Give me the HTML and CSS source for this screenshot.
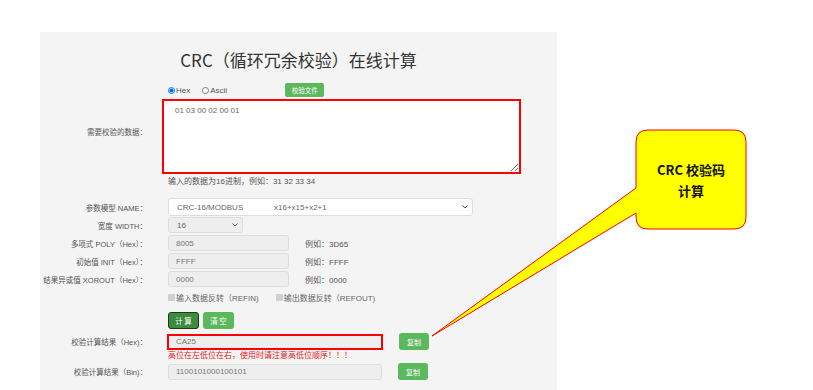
FILE: index.html
```html
<!DOCTYPE html>
<html lang="zh-CN">
<head>
    <meta charset="UTF-8">
    <meta name="viewport" content="width=device-width, initial-scale=1.0">
    <title>CRC（循环冗余校验）在线计算</title>
    <link rel="stylesheet" href="styles.css">
</head>
<body>

    <div class="panel">
        <h1>CRC（循环冗余校验）在线计算</h1>

        <div class="row row-mode">
            <div class="label"></div>
            <div class="field">
                <label class="radio"><input type="radio" name="mode" checked>Hex</label>
                <label class="radio"><input type="radio" name="mode">Ascii</label>
                <button class="btn btn-file">校验文件</button>
            </div>
        </div>

        <div class="row row-data">
            <div class="label label-top">需要校验的数据：</div>
            <div class="field field-col">
                <textarea class="data">01 03 00 02 00 01</textarea>
                <div class="hint">输入的数据为16进制，例如：31 32 33 34</div>
            </div>
        </div>

        <div class="row row-name">
            <div class="label">参数模型 NAME：</div>
            <div class="field">
                <div class="select select-name">
                    <span class="model">CRC-16/MODBUS</span>
                    <span>x16+x15+x2+1</span>
                    <svg class="chev" width="6" height="4" viewBox="0 0 6 4"><path d="M0.5 0.5 L3 3 L5.5 0.5" fill="none" stroke="#555" stroke-width="1"/></svg>
                </div>
            </div>
        </div>

        <div class="row row-width">
            <div class="label">宽度 WIDTH：</div>
            <div class="field">
                <div class="select select-width">
                    <span>16</span>
                    <svg class="chev" width="6" height="4" viewBox="0 0 6 4"><path d="M0.5 0.5 L3 3 L5.5 0.5" fill="none" stroke="#555" stroke-width="1"/></svg>
                </div>
            </div>
        </div>

        <div class="row row-param">
            <div class="label">多项式 POLY（Hex）：</div>
            <div class="field">
                <input class="input input-short" value="8005" disabled>
                <span class="example">例如：3D65</span>
            </div>
        </div>

        <div class="row row-param">
            <div class="label">初始值 INIT（Hex）：</div>
            <div class="field">
                <input class="input input-short" value="FFFF" disabled>
                <span class="example">例如：FFFF</span>
            </div>
        </div>

        <div class="row row-param">
            <div class="label">结果异或值 XOROUT（Hex）：</div>
            <div class="field">
                <input class="input input-short" value="0000" disabled>
                <span class="example">例如：0000</span>
            </div>
        </div>

        <div class="row row-check">
            <div class="label"></div>
            <div class="field">
                <label class="check check-in"><input type="checkbox" disabled>输入数据反转（REFIN)</label>
                <label class="check"><input type="checkbox" disabled>输出数据反转（REFOUT)</label>
            </div>
        </div>

        <div class="row row-btns">
            <div class="label"></div>
            <div class="field">
                <button class="btn btn-calc active">计 算</button>
                <button class="btn btn-calc">清 空</button>
            </div>
        </div>

        <div class="row row-hex">
            <div class="label">校验计算结果（Hex)：</div>
            <div class="field">
                <input class="input input-result marked" value="CA25" readonly>
                <button class="btn btn-copy">复制</button>
            </div>
        </div>

        <div class="row row-warn">
            <div class="label"></div>
            <div class="field warn">高位在左低位在右，使用时请注意高低位顺序！！！</div>
        </div>

        <div class="row row-bin">
            <div class="label">校验计算结果（Bin)：</div>
            <div class="field">
                <input class="input input-result" value="1100101000100101" readonly>
                <button class="btn btn-copy">复制</button>
            </div>
        </div>
    </div>

    <!-- выноска поверх страницы -->
    <svg class="callout-shape" width="813" height="390" viewBox="0 0 813 390">
        <path d="M432 336 L636 213 L636 217 Q636 229 648 229 L734 229 Q746 229 746 217 L746 142 Q746 130 734 130 L648 130 Q636 130 636 142 L636 188 Z"
              fill="#ffff00" stroke="#ff0000" stroke-width="1"/>
    </svg>
    <div class="callout-text">CRC 校验码<br>计算</div>

</body>
</html>
```

FILE: styles.css
```css
:root {
    --panel: #f4f4f4;
    --label: #555;
    --value: #777;
    --border: #ddd;
    --green: #5cb85c;
    --red: #ff0000;
}

body {
    font-family: 'Liberation Sans', 'Noto Sans CJK SC', sans-serif;
    background: #fff;
    margin: 0;
    width: 813px;
    height: 390px;
    position: relative;
    overflow: hidden;
}

.panel {
    margin: 32px 0 0 40px;
    width: 517px;
    height: 358px;
    background: var(--panel);
}

h1 {
    font-family: 'Noto Sans CJK SC', sans-serif;
    font-size: 17px;
    font-weight: 400;
    line-height: 22px;
    color: #333;
    text-align: center;
    margin: 0;
    padding-top: 17px;
}

.row {
    display: grid;
    grid-template-columns: 107px 1fr;
    column-gap: 21px;
    margin-top: 2px;
}

.label {
    display: flex;
    justify-content: flex-end;
    align-items: center;
    white-space: nowrap;
    font-size: 7.5px;
    color: var(--label);
}

.label-top {
    align-items: flex-start;
    padding-top: 27px;
}

.field {
    display: flex;
    align-items: center;
    font-size: 8px;
    color: var(--label);
    white-space: nowrap;
}

.field-col {
    flex-direction: column;
    align-items: flex-start;
}

.row-mode { margin-top: 12px; height: 14px; }
.row-name { margin-top: 10px; height: 18px; }
.row-width { margin-top: 1px; height: 16px; }
.row-param { height: 16px; }
.row-check { margin-top: 3px; height: 14px; }
.row-btns { margin-top: 8px; height: 17px; }
.row-hex { margin-top: 4px; height: 16px; }
.row-warn { margin-top: 1px; height: 12px; }
.row-bin { margin-top: 1px; height: 16px; }

.radio {
    display: flex;
    align-items: center;
    margin-right: 12px;
}

.radio input {
    width: 7px;
    height: 7px;
    margin: 0 1px 0 0;
}

.btn {
    border: none;
    color: #fff;
    background: var(--green);
    font-family: 'Noto Sans CJK SC', sans-serif;
    border-radius: 2px;
    padding: 0;
    cursor: pointer;
}

.btn-file {
    width: 39px;
    height: 14px;
    font-size: 6.5px;
    margin-left: 46px;
}

.data {
    box-sizing: border-box;
    width: 359px;
    height: 75px;
    margin: 0 0 0 -6px;
    border: 2px solid var(--red);
    background: #fff;
    padding: 5px 11px;
    font-family: 'Liberation Sans', sans-serif;
    font-size: 8px;
    color: #666;
}

.hint {
    margin-top: 2px;
    line-height: 12px;
}

.select {
    box-sizing: border-box;
    display: flex;
    align-items: center;
    height: 100%;
    border: 1px solid var(--border);
    border-radius: 3px;
    padding: 0 4px 0 8px;
    color: #666;
}

.select-name {
    width: 305px;
    background: #fff;
}

.select-width {
    width: 75px;
    background: #eee;
}

.model {
    width: 97px;
}

.chev {
    margin-left: auto;
}

.input {
    box-sizing: border-box;
    height: 16px;
    border: 1px solid var(--border);
    border-radius: 3px;
    background: #eee;
    padding: 0 7px;
    font-family: 'Liberation Sans', sans-serif;
    font-size: 8px;
    color: var(--value);
    margin: 0;
}

.input-short {
    width: 121px;
}

.example {
    margin-left: 16px;
}

.check {
    display: flex;
    align-items: center;
    color: #666;
}

.check-in {
    margin-right: 17px;
}

.check input {
    appearance: none;
    width: 7px;
    height: 7px;
    margin: 0 1px 0 0;
    background: #d0d0d0;
    border-radius: 1px;
}

.btn-calc {
    width: 31px;
    height: 17px;
    font-size: 7.5px;
    margin-right: 4px;
    border-radius: 3px;
}

.btn-calc.active {
    background: #3d8b3d;
    border: 1.5px solid #1e3a1e;
}

.input-result {
    width: 214px;
}

.marked {
    width: 216px;
    margin-left: -1px;
    border: 2px solid var(--red);
    border-radius: 0;
}

.btn-copy {
    width: 30px;
    height: 17px;
    font-size: 7px;
    border-radius: 3px;
    margin-left: 16px;
}

.warn {
    color: #e02020;
    line-height: 12px;
}

.callout-shape {
    position: absolute;
    left: 0;
    top: 0;
    pointer-events: none;
}

.callout-text {
    position: absolute;
    left: 636px;
    top: 130px;
    width: 110px;
    height: 99px;
    display: flex;
    align-items: center;
    justify-content: center;
    text-align: center;
    font-family: 'Noto Sans CJK SC', sans-serif;
    font-weight: 700;
    font-size: 13px;
    line-height: 21px;
    color: #111;
}
```
